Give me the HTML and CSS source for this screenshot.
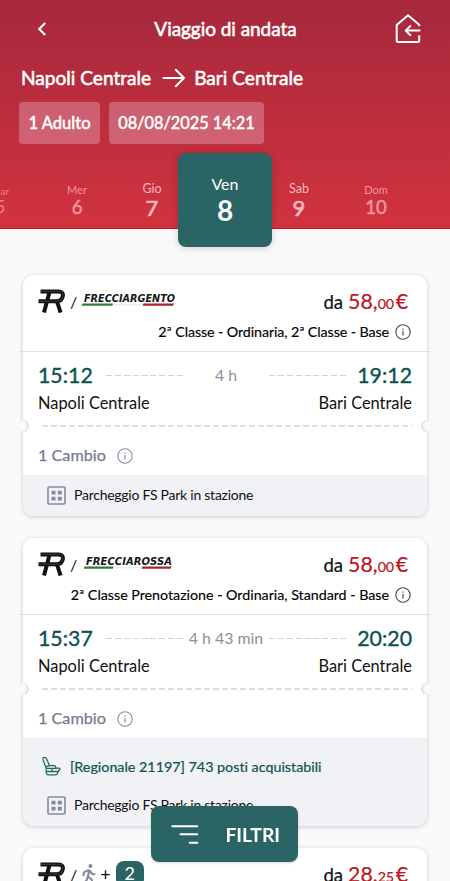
FILE: index.html
```html
<!DOCTYPE html>
<html lang="it">
<head>
<meta charset="utf-8">
<meta name="viewport" content="width=device-width, initial-scale=1">
<title>Viaggio di andata</title>
<link rel="stylesheet" href="styles.css">
</head>
<body>
<svg class="defs" width="0" height="0" aria-hidden="true">
  <symbol id="regionale" viewBox="0 0 27 24">
    <path d="M2.5 2.5H20.5C24 2.5 25.3 4.2 24.8 7.2C24.2 10.8 22.5 12.3 18.5 12.3H.5M11.5 3L6 23.5M19 12.5L22.6 23.5" fill="none" stroke="#111" stroke-width="4"/>
    <path d="M3 2.3H20.5C24 2.3 25.2 4 24.8 7.2C24.2 10.8 22.5 12.2 18.5 12.2H1" fill="none" stroke="#666" stroke-width=".5"/>
  </symbol>
  <symbol id="info" viewBox="0 0 16 16">
    <g fill="none" stroke="currentColor"><circle cx="8" cy="8" r="7.2" stroke-width="1.1"/><path d="M8 7V11.6M8 4.5V5.8" stroke-width="1.2"/></g>
  </symbol>
  <symbol id="parking" viewBox="0 0 19 19">
    <rect x="1" y="1" width="17" height="17" rx="1" fill="none" stroke="#858b9f" stroke-width="1.6"/>
    <path d="M4.5 4.7h4v3.8h-4zM10.8 4.7h4v3.8h-4zM4.5 10.8h4v3.8h-4zM10.8 10.8h4v3.8h-4z" fill="#858b9f"/>
  </symbol>
</svg>

<header class="header">
  <div class="topbar">
    <svg class="back" viewBox="0 0 10 16"><path d="M8.2 2L2.2 8L8.2 14" fill="none" stroke="#fff" stroke-width="2.1"/></svg>
    <h1 class="title">Viaggio di andata</h1>
    <svg class="home" viewBox="0 0 26 30"><path d="M24.2 12.2V10.8L13 1.2L1.7 11V26.8Q1.7 28 2.9 28H23Q24.2 28 24.2 26.8V21.2M25.3 16.6H11M15.9 11.4L10.7 16.6L15.9 21.8" fill="none" stroke="#fff" stroke-width="2" stroke-linejoin="round"/></svg>
  </div>
  <div class="route">
    <span class="from">Napoli Centrale</span>
    <svg class="arrow" viewBox="0 0 24 20"><path d="M1.5 10H22M13.8 1.8L22 10L13.8 18.2" fill="none" stroke="#fff" stroke-width="2" stroke-linecap="round" stroke-linejoin="round"/></svg>
    <span class="to">Bari Centrale</span>
  </div>
  <div class="chips"><span class="chip">1 Adulto</span><span class="chip chip-date">08/08/2025 14:21</span></div>
  <nav class="days">
    <div class="day far"><span>Mar</span><b>5</b></div>
    <div class="day mid"><span>Mer</span><b>6</b></div>
    <div class="day near"><span>Gio</span><b>7</b></div>
    <div class="day selected"><span>Ven</span><b>8</b></div>
    <div class="day near"><span>Sab</span><b>9</b></div>
    <div class="day mid"><span>Dom</span><b>10</b></div>
    <div class="day far"><span>Lun</span><b>11</b></div>
  </nav>
</header>

<main class="results">
  <article class="card">
    <div class="offer">
      <div class="brand-row">
        <svg class="reg"><use href="#regionale"/></svg><span class="slash">/</span>
        <svg class="freccia" viewBox="0 0 96 16">
          <text x="3" y="10" textLength="91" lengthAdjust="spacingAndGlyphs" class="logo-text">FRECCIARGENTO</text>
          <path d="M1.5 11.6H32L31.3 13.8H.7z" fill="#2e7a3c"/><path d="M32 12.8H62" stroke="#ddd" stroke-width=".7"/><path d="M62.5 11.6H93L92.2 13.8H61.7z" fill="#a81f30"/>
        </svg>
        <span class="price">da <em>58,<small>00</small><i>€</i></em></span>
      </div>
      <div class="class-row"><span class="cls-a">2ª Classe - Ordinaria, 2ª Classe - Base</span><svg class="info dark"><use href="#info"/></svg></div>
    </div>
    <div class="times"><span class="time">15:12</span><span class="dash"></span><span class="duration">4 h</span><span class="dash"></span><span class="time arrive">19:12</span></div>
    <div class="stations"><span>Napoli Centrale</span><span>Bari Centrale</span></div>
    <div class="perforation"><span class="notch left"></span><span class="holes"></span><span class="notch right"></span></div>
    <div class="changes"><span>1 Cambio</span><svg class="info"><use href="#info"/></svg></div>
    <div class="extras"><div class="parking"><svg><use href="#parking"/></svg><span>Parcheggio FS Park in stazione</span></div></div>
  </article>

  <article class="card">
    <div class="offer">
      <div class="brand-row">
        <svg class="reg"><use href="#regionale"/></svg><span class="slash">/</span>
        <svg class="freccia" viewBox="0 0 96 16">
          <text x="5" y="10" textLength="86" lengthAdjust="spacingAndGlyphs" class="logo-text">FRECCIAROSSA</text>
          <path d="M3.5 11.6H32.5L31.8 13.8H2.7z" fill="#2e7a3c"/><path d="M32.5 12.8H61" stroke="#ddd" stroke-width=".7"/><path d="M61.5 11.6H90.5L89.7 13.8H60.7z" fill="#a81f30"/>
        </svg>
        <span class="price">da <em>58,<small>00</small><i>€</i></em></span>
      </div>
      <div class="class-row"><span class="cls-b">2ª Classe Prenotazione - Ordinaria, Standard - Base</span><svg class="info dark"><use href="#info"/></svg></div>
    </div>
    <div class="times"><span class="time">15:37</span><span class="dash"></span><span class="duration">4 h 43 min</span><span class="dash"></span><span class="time arrive">20:20</span></div>
    <div class="stations"><span>Napoli Centrale</span><span>Bari Centrale</span></div>
    <div class="perforation"><span class="notch left"></span><span class="holes"></span><span class="notch right"></span></div>
    <div class="changes"><span>1 Cambio</span><svg class="info"><use href="#info"/></svg></div>
    <div class="extras">
      <div class="seats">
        <svg viewBox="0 0 19 20"><path d="M1 3.2Q.8 1.3 2.6 1.3Q4 1.2 4.5 2.8L7.6 9.7H13L14.2 12.2H17Q18.5 12.6 17.5 14L16.3 15.2L15.5 17.5Q15 18.8 13.5 18.8H6Q4.4 18.8 4.3 17L4.2 12.2L1.2 4.5M3.8 10.8L7.6 9.7M4.4 12.3H14.2M4.5 15.5H16.2M10 12.4V15.2" fill="none" stroke="#24685f" stroke-width="1.3" stroke-linejoin="round" stroke-linecap="round"/></svg>
        <span>[Regionale 21197] 743 posti acquistabili</span>
      </div>
      <div class="parking"><svg><use href="#parking"/></svg><span>Parcheggio FS Park in stazione</span></div>
    </div>
  </article>

  <article class="card">
    <div class="offer">
      <div class="brand-row">
        <svg class="reg"><use href="#regionale"/></svg><span class="slash">/</span>
        <svg class="walk" viewBox="0 0 14 21"><circle cx="8.4" cy="2.1" r="2" fill="#858b9f"/><path d="M7 5.7L6 12.5L9.6 15.5L10.8 20M7 5.7L2 8.4L1.2 12M7.6 6.2L9.5 9.4L13.2 10.6M5.8 12.5L4.5 16.5L1 20" fill="none" stroke="#858b9f" stroke-width="2.1" stroke-linejoin="round"/></svg>
        <span class="plus">+</span><span class="count">2</span>
        <span class="price">da <em>28,<small>25</small><i>€</i></em></span>
      </div>
    </div>
  </article>
</main>

<button class="filter"><svg viewBox="0 0 28 21"><path d="M1.3 2.2H26.3M9.5 10.3H26.3M18.7 18.7H26.3" stroke="#fff" stroke-width="2" stroke-linecap="round"/></svg><span>FILTRI</span></button>
</body>
</html>
```

FILE: styles.css
```css
* { box-sizing: border-box; }
html { height: 100%; overflow: hidden; }
body { margin: 0; height: 881px; overflow: hidden; background: #fafafa; color: #111; font-family: Lato, "Open Sans", sans-serif; font-weight: 400; font-variant-ligatures: none; }
svg { display: block; flex: none; overflow: visible; }
.defs { position: absolute; }

.header { height: 229px; overflow-x: clip; color: #fff; background: linear-gradient(#a6283c, #d1333e); border-bottom: 1px solid #b71c30; }
.topbar { height: 57px; display: flex; align-items: center; justify-content: space-between; padding: 0 29px 0 37px; }
.back { width: 10px; height: 16px; }
.home { width: 26px; height: 30px; }
.title { margin: 0 0 0 9px; font-size: 19px; letter-spacing: -.05px; font-weight: 400; -webkit-text-stroke: .55px #fff; }
.route { height: 40px; display: flex; align-items: center; padding-left: 21px; font-size: 19.1px; -webkit-text-stroke: .55px #fff; }
.arrow { width: 24px; height: 20px; margin: 1px 8px 0 11px; }
.chips { display: flex; gap: 9px; margin: 5px 0 0 19px; }
.chip { height: 42px; width: 81px; line-height: 42px; text-align: center; border-radius: 4px; background: rgba(222, 148, 168, .5); font-size: 16.6px; -webkit-text-stroke: .5px #fff; }
.chip-date { width: 155px; font-size: 16.3px; }

.days { display: grid; grid-template-columns: 77px 76px 74px 72px 76px 78px 90px; margin: 9px 0 0 -38px; width: 543px; }
.day { height: 94px; display: flex; flex-direction: column; align-items: center; }
.day b { font-weight: 700; }
.far { padding-top: 32px; font-size: 9.5px; color: #ed8490; }
.far span { line-height: 13px; }
.far b { font-size: 17px; line-height: 18px; font-weight: 400; }
.mid { padding-top: 30px; font-size: 11px; color: #f2949e; }
.mid span { line-height: 14px; }
.mid b { font-size: 18.5px; line-height: 20px; font-weight: 400; -webkit-text-stroke: .5px #f2949e; }
.near { padding-top: 27px; font-size: 12.5px; color: #f9b7bf; }
.near span { line-height: 17px; }
.near b { font-size: 22px; line-height: 22px; font-weight: 400; -webkit-text-stroke: .7px #f9b7bf; }
.selected { margin: 0 -11px; padding-top: 21px; border-radius: 8px; background: #2a6464; color: #fff; font-size: 16px; box-shadow: 0 1px 8px rgba(0, 0, 0, .18); }
.selected span { line-height: 20px; }
.selected b { font-size: 28px; line-height: 33px; }

.results { padding: 46px 23px 0; display: flex; flex-direction: column; gap: 22px; }
.card { flex: none; background: #fff; border-radius: 11px; box-shadow: 0 1px 5px rgba(0, 0, 0, .19); }
.offer { height: 77px; margin: 0 -4px; padding: 11px 23px 0 19px; border-bottom: 1px solid #dfe0e7; }
.brand-row { height: 30px; display: flex; align-items: center; }
.reg { width: 27px; height: 24px; }
.slash { margin: 0 5px 0 5px; font-size: 16px; }
.freccia { width: 96px; height: 16px; margin-top: -2px; margin-left: -1px; }
.logo-text { font: italic 700 9.8px "DejaVu Sans", sans-serif; fill: #15171c; }
.price { margin-left: auto; font-size: 18.6px; display: flex; align-items: baseline; gap: 5px; -webkit-text-stroke: .2px; }
.price em { font-style: normal; font-size: 21.3px; color: #bd1521; }
.price small { font-size: 14.3px; letter-spacing: -.3px; }
.price i { font-style: normal; margin-left: 2px; }
.class-row { height: 31px; display: flex; align-items: center; justify-content: flex-end; gap: 6px; margin-right: -3px; font-size: 14.3px; color: #000; -webkit-text-stroke: .15px; }
.cls-a { letter-spacing: -.11px; }
.cls-b { letter-spacing: -.03px; }
.info { width: 16px; height: 16px; color: #858b9f; }
.info.dark { color: #44464e; }

.times { height: 30px; margin-top: 8px; padding: 0 15px; display: grid; grid-template-columns: 68px 77px 1fr 77px 66px; align-items: center; }
.time { font-size: 21.3px; color: #0c514e; -webkit-text-stroke: .35px #0c514e; }
.arrive { justify-self: end; }
.dash, .holes { height: 1px; background: repeating-linear-gradient(90deg, #d3d3d3 0 6px, transparent 6px 8.9px); }
.dash { margin-top: 1px; }
.duration { margin-top: -2px; text-align: center; font-size: 15.9px; color: #8c90a1; }
.stations { height: 25px; padding: 0 15px; display: flex; justify-content: space-between; align-items: center; font-size: 16.4px; }
.perforation { height: 21px; display: flex; align-items: center; justify-content: space-between; overflow: hidden; margin: 0 -3px; }
.holes { flex: 1; height: 2px; margin: 0 9px 0 13px; background: repeating-linear-gradient(90deg, #dedede 0 6px, transparent 6px 9px); }
.notch { width: 12px; height: 12px; border-radius: 50%; background: #fafafa; }
.left { margin-left: -3px; box-shadow: inset -2px 0 2px rgba(0, 0, 0, .1); }
.right { margin-right: -3px; box-shadow: inset 2px 0 2px rgba(0, 0, 0, .1); }
.changes { height: 39px; display: flex; align-items: center; gap: 11px; padding-left: 15px; font-size: 16.2px; color: #747b91; -webkit-text-stroke: .25px; }
.changes span { margin-top: -2px; }
.extras { background: #f0f2f6; border-radius: 0 0 11px 11px; }
.parking { height: 41px; display: flex; align-items: center; gap: 8px; padding-left: 24px; font-size: 14px; letter-spacing: -.25px; }
.parking span { margin-top: -2px; }
.parking svg { width: 19px; height: 19px; }
.seats { height: 47px; padding: 9px 0 0 19px; display: flex; align-items: center; gap: 9px; font-size: 14.3px; color: #0c514e; -webkit-text-stroke: .2px; }
.seats svg { width: 19px; height: 20px; }
.plus { margin: 0 5px 0 4px; font-size: 18px; }
.walk { width: 14px; height: 21px; }
.count { width: 28px; height: 26px; border-radius: 8px; line-height: 25px; text-align: center; background: #2a6464; color: #fff; font-size: 18px; }

.filter { position: fixed; left: 151px; top: 806px; width: 147px; height: 56px; padding: 0 18px 0 20px; display: flex; align-items: center; justify-content: space-between; border: 0; border-radius: 8px; background: #2a6464; color: #fff; font: 700 19.3px Lato, sans-serif; box-shadow: 0 1px 3px rgba(0, 0, 0, .15); }
.filter svg { width: 28px; height: 21px; }
```
